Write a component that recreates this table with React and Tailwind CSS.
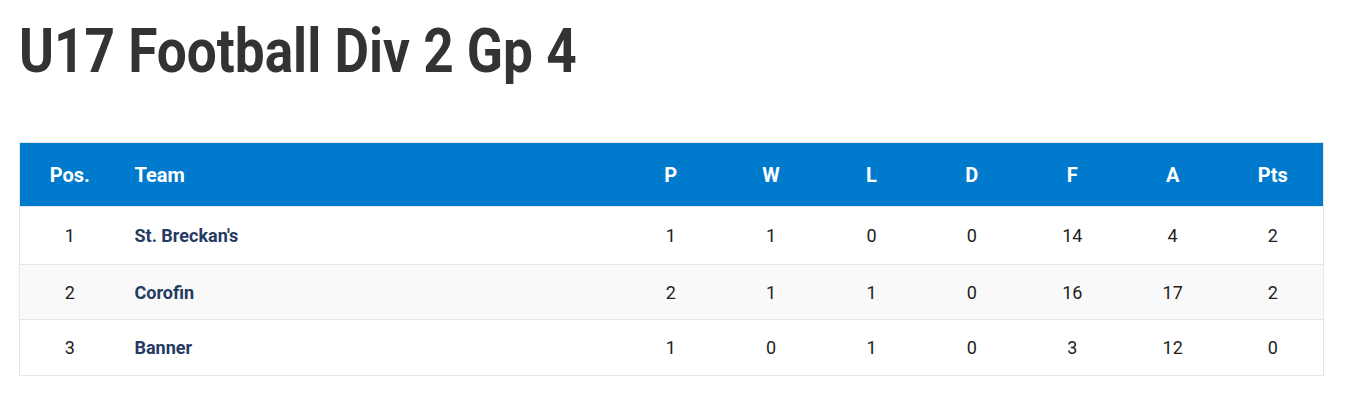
const rows = [
  { pos: 1, team: "St. Breckan's", p: 1, w: 1, l: 0, d: 0, f: 14, a: 4, pts: 2, h: "h-[58px]" },
  { pos: 2, team: "Corofin", p: 2, w: 1, l: 1, d: 0, f: 16, a: 17, pts: 2, h: "h-[55px]" },
  { pos: 3, team: "Banner", p: 1, w: 0, l: 1, d: 0, f: 3, a: 12, pts: 0, h: "h-[56px]" },
];

const stats = ["p", "w", "l", "d", "f", "a", "pts"];

export default function App() {
  return (
    <div className="min-h-[406px] bg-white px-[19px] pt-[14px] font-['Roboto',sans-serif]">
      <h1 className="inline-block origin-left scale-x-[0.857] text-[62px] leading-[74px] font-bold text-[#333333] whitespace-nowrap">
        U17 Football Div 2 Gp 4
      </h1>

      <table className="mt-[54px] w-[1304px] table-fixed border-collapse border border-[#e6e6e6]">
        <colgroup>
          <col className="w-[100px]" />
          <col className="w-[501px]" />
          {stats.map((s) => (
            <col key={s} className="w-[100.4px]" />
          ))}
        </colgroup>
        <thead>
          <tr className="bg-[#007acd] text-white text-[20px] font-bold">
            <th className="h-[64px] text-center">Pos.</th>
            <th className="h-[64px] pl-[15px] text-left">Team</th>
            {["P", "W", "L", "D", "F", "A", "Pts"].map((h) => (
              <th key={h} className="h-[64px] text-center">
                {h}
              </th>
            ))}
          </tr>
        </thead>
        <tbody>
          {rows.map((r, i) => (
            <tr
              key={r.pos}
              className={
                "border-t border-[#e6e6e6] text-[18px] text-[#222222] " +
                (i === 1 ? "bg-[#f9f9f9]" : "bg-white")
              }
            >
              <td className={r.h + " text-center"}>{r.pos}</td>
              <td className={r.h + " pl-[15px] font-bold text-[#253a63]"}>{r.team}</td>
              {stats.map((s) => (
                <td key={s} className={r.h + " text-center"}>
                  {r[s]}
                </td>
              ))}
            </tr>
          ))}
        </tbody>
      </table>
    </div>
  );
}
